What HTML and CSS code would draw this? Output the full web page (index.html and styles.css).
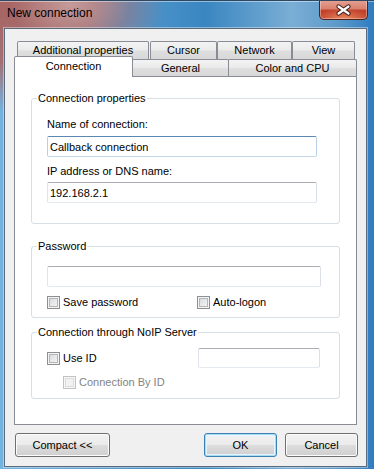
FILE: index.html
```html
<!DOCTYPE html>
<html>
<head>
<meta charset="utf-8">
<link rel="stylesheet" href="styles.css">
</head>
<body>
<div class="window">
  <div class="titlebar">
    <span class="title">New connection</span>
    <div class="close">
      <svg width="47" height="20" viewBox="0 0 47 20">
        <path d="M18.5 6.5 L28.5 13.5 M28.5 6.5 L18.5 13.5" stroke="#3b1a16" stroke-width="4.2" stroke-linecap="round"/>
        <path d="M18.5 6.5 L28.5 13.5 M28.5 6.5 L18.5 13.5" stroke="#ffffff" stroke-width="2.2" stroke-linecap="round"/>
      </svg>
    </div>
  </div>
  <div class="client">
    <div class="tabs">
      <div class="tabrow back">
        <div class="tab t-add">Additional properties</div>
        <div class="tab t-cursor">Cursor</div>
        <div class="tab t-net">Network</div>
        <div class="tab t-view">View</div>
      </div>
      <div class="tabrow front">
        <div class="tab sel t-conn">Connection</div>
        <div class="tab t-gen">General</div>
        <div class="tab t-color">Color and CPU</div>
      </div>
    </div>
    <div class="panel">
      <fieldset class="group g1">
        <legend>Connection properties</legend>
        <div class="label">Name of connection:</div>
        <input class="field focused w270 f1" type="text" value="Callback connection" readonly>
        <div class="label l2">IP address or DNS name:</div>
        <input class="field w270 f2" type="text" value="192.168.2.1" readonly>
      </fieldset>
      <fieldset class="group g2">
        <legend>Password</legend>
        <input class="field w274" type="password" value="" readonly>
        <div class="checkrow">
          <label class="check"><span class="box"></span>Save password</label>
          <label class="check"><span class="box"></span>Auto-logon</label>
        </div>
      </fieldset>
      <fieldset class="group g3">
        <legend>Connection through NoIP Server</legend>
        <div class="idrow">
          <label class="check"><span class="box"></span>Use ID</label>
          <input class="field w122" type="text" value="" readonly>
        </div>
        <label class="check disabled sub"><span class="box"></span>Connection By ID</label>
      </fieldset>
    </div>
    <div class="buttons">
      <button class="btn compact">Compact &lt;&lt;</button>
      <div class="right">
        <button class="btn default">OK</button>
        <button class="btn">Cancel</button>
      </div>
    </div>
  </div>
</div>
</body>
</html>
```

FILE: styles.css
```css
html, body {
  margin: 0;
  padding: 0;
  background: #ffffff;
}

body {
  font-family: "Liberation Sans", Arial, sans-serif;
  font-size: 11px;
  color: #000;
}

.window {
  width: 374px;
  height: 469px;
  box-sizing: border-box;
  display: flex;
  flex-direction: column;
  overflow: hidden;
  border-top: 1px solid #2c4863;
  background:
    radial-gradient(ellipse 60px 40px at 70px 4px, rgba(230, 200, 198, 0.5), rgba(230, 200, 198, 0) 100%),
    radial-gradient(ellipse 165px 110px at 0px 0px, rgba(168, 100, 98, 1) 0%, rgba(170, 104, 102, 0.9) 55%, rgba(170, 110, 110, 0) 100%),
    linear-gradient(90deg, #74b2df 0%, #5d9fd2 25%, #3a86c1 55%, #7aaed5 78%, #5d9acb 90%, #2f7cc0 100%);
}

.titlebar {
  height: 27px;
  flex: none;
  display: flex;
  justify-content: space-between;
  align-items: flex-start;
  box-shadow: inset 0 1px 0 rgba(255, 255, 255, 0.45);
  padding: 0 6px 0 7px;
}

.title {
  font-family: "Liberation Sans", Arial, sans-serif;
  font-size: 12px;
  line-height: 15px;
  margin-top: 5px;
  color: #000;
}

.close {
  width: 47px;
  height: 19px;
  margin-top: -1px;
  border: 1px solid #4b2420;
  border-top: none;
  border-radius: 0 0 5px 5px;
  background:
    radial-gradient(ellipse 30px 10px at 50% 100%, rgba(255, 170, 120, 0.7), rgba(255, 170, 120, 0)),
    linear-gradient(#e7a293 0%, #d8826f 45%, #c2422c 55%, #b93a25 100%);
  box-shadow: inset 0 0 0 1px rgba(255, 220, 210, 0.45);
}

.close svg {
  display: block;
}

.client {
  flex: 1;
  margin: 0 7px 2px 4px;
  border: 1px solid #5b6b7c;
  box-shadow: 0 0 0 1px rgba(255, 255, 255, 0.4);
  background: #f0f0f0;
  display: flex;
  flex-direction: column;
  padding: 12px 9px 9px 9px;
}

/* Tabs */
.tabs {
  flex: none;
}

.tabrow {
  display: flex;
  align-items: flex-start;
}

.tabrow.back {
  height: 18px;
  padding-left: 3px;
}

.tabrow.front {
  height: 20px;
  margin-top: -3px;
}

.tab {
  box-sizing: border-box;
  border: 1px solid #898c95;
  border-radius: 2px 2px 0 0;
  background: linear-gradient(#f3f3f3 0%, #ebebeb 45%, #dedede 55%, #d8d8d8 100%);
  text-align: center;
  white-space: nowrap;
}

.back .tab {
  height: 18px;
  border-bottom: none;
  line-height: 16px;
}

.t-add { width: 132px; }
.t-cursor { width: 67px; margin-left: 1px; }
.t-net { width: 75px; }
.t-view { width: 63px; }

.front .tab {
  height: 17px;
  margin-top: 3px;
  border-bottom: none;
  line-height: 16px;
}

.front .tab.sel {
  position: relative;
  z-index: 1;
  height: 21px;
  margin-top: 0;
  background: #ffffff;
  line-height: 16px;
  padding-top: 1px;
}

.t-conn { width: 119px; }
.t-gen { width: 97px; margin-left: -1px; }
.t-color { width: 129px; margin-left: -1px; }

/* Panel */
.panel {
  flex: 1;
  border: 1px solid #898c95;
  background: #ffffff;
  padding: 0 16px;
}

.group {
  margin: 0;
  border: 1px solid #d5dfe5;
  border-radius: 3px;
  padding: 0 0 0 15px;
  min-width: 0;
}

.group legend {
  margin-left: -10px;
  padding: 0 1px;
  line-height: 13px;
  font-size: 11px;
}

.g1 {
  margin-top: 15px;
  padding-top: 13px;
  padding-bottom: 20px;
}

.g2 {
  margin-top: 16px;
  padding-top: 13px;
  padding-bottom: 8px;
}

.g3 {
  margin-top: 8px;
  padding-top: 9px;
  padding-bottom: 9px;
}

.label {
  line-height: 13px;
}

.label.l2 {
  margin-top: 8px;
}

.field {
  display: block;
  box-sizing: border-box;
  height: 21px;
  margin: 0;
  padding: 0 2px;
  font-family: "Liberation Sans", Arial, sans-serif;
  font-size: 11px;
  color: #000;
  background: #ffffff;
  border: 1px solid;
  border-color: #abadb3 #dbdfe6 #e3e9ef #e2e3ea;
  border-radius: 2px;
  outline: none;
}

.field.focused {
  border-color: #5b88b0 #b7d0e6 #c2d8ea #b7d0e6;
}

.w270 { width: 270px; }
.w274 { width: 274px; }
.w122 { width: 122px; height: 20px; }

.f1 { margin-top: 5px; }
.f2 { margin-top: 4px; }

.checkrow {
  display: grid;
  grid-template-columns: 150px auto;
  margin-top: 9px;
  height: 13px;
}

.check {
  display: flex;
  align-items: center;
  gap: 3px;
  line-height: 13px;
  height: 13px;
  white-space: nowrap;
}

.box {
  width: 13px;
  height: 13px;
  box-sizing: border-box;
  flex: none;
  border: 1px solid #8e8f8f;
  background: linear-gradient(135deg, #cfd3d8 0%, #e6e8ea 50%, #f7f7f7 100%);
  box-shadow: inset 0 0 0 1px #f4f4f4, inset 0 0 0 2px #b3b7bc;
}

.check.disabled {
  color: #838383;
}

.check.disabled .box {
  border-color: #c2c2c2;
  background: #f2f2f2;
  box-shadow: inset 0 0 0 1px #f7f7f7, inset 0 0 0 2px #dcdcdc;
}

.idrow {
  display: grid;
  grid-template-columns: 151px 122px;
  align-items: center;
  height: 20px;
}

.check.sub {
  margin-top: 8px;
  margin-left: 16px;
}

/* Buttons */
.buttons {
  flex: none;
  display: flex;
  justify-content: space-between;
  margin-top: 8px;
  padding: 0 0 0 1px;
  margin-right: -1px;
}

.buttons .right {
  display: flex;
  gap: 8px;
}

.btn {
  box-sizing: border-box;
  height: 24px;
  margin: 0;
  padding: 0;
  font-family: "Liberation Sans", Arial, sans-serif;
  font-size: 11px;
  color: #000;
  border: 1px solid #707070;
  border-radius: 3px;
  background: linear-gradient(#f2f2f2 0%, #ebebeb 50%, #dddddd 50%, #cfcfcf 100%);
  box-shadow: inset 0 0 0 1px #fcfcfc;
  width: 73px;
}

.btn.compact {
  width: 95px;
}

.btn.default {
  border-color: #3c7fb1;
  box-shadow: inset 0 0 0 1px #a9dcf4, inset 0 0 0 2px #e6f5fd;
}
```
